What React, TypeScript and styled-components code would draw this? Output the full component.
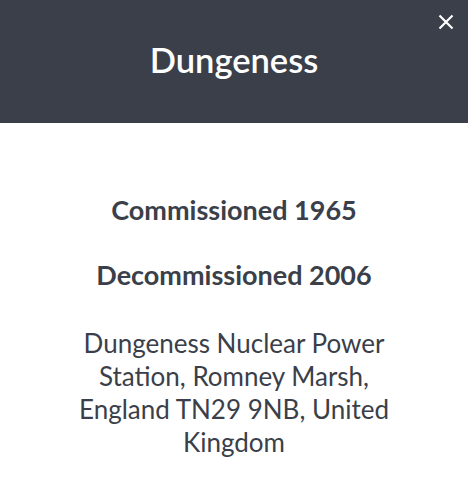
import React from 'react';
import styled, { createGlobalStyle } from 'styled-components';

const GlobalStyle = createGlobalStyle`
  html, body {
    margin: 0;
    padding: 0;
    background: #ffffff;
  }

  body {
    font-family: Lato, 'Open Sans', sans-serif;
    color: #3a3f4a;
  }
`;

const Modal = styled.div`
  width: 468px;
  height: 490px;
  display: flex;
  flex-direction: column;
  background: #ffffff;
`;

const Header = styled.header`
  position: relative;
  height: 123px;
  background: #3a3f4a;
  display: flex;
  align-items: center;
  justify-content: center;
`;

const Title = styled.h2`
  margin: 0 0 4px;
  color: #ffffff;
  font-size: 34.5px;
  font-weight: 600;
`;

const CloseButton = styled.button`
  position: absolute;
  top: 13px;
  right: 13px;
  width: 18px;
  height: 18px;
  padding: 0;
  border: 0;
  background: none;
  cursor: pointer;
  display: flex;
  align-items: center;
  justify-content: center;
`;

const Body = styled.div`
  padding: 70px 30px 0;
  display: flex;
  flex-direction: column;
  align-items: center;
  text-align: center;
`;

const Heading = styled.p`
  margin: 0 0 32px;
  font-size: 27px;
  font-weight: 700;
  line-height: 33px;
`;

const Address = styled.p`
  margin: 4px 0 0;
  font-size: 26px;
  line-height: 33px;
  max-width: 320px;
`;

const App = () => (
  <>
    <GlobalStyle />
    <Modal>
      <Header>
        <Title>Dungeness</Title>
        <CloseButton aria-label="Close">
          <svg width="16" height="16" viewBox="0 0 16 16">
            <path d="M1.5 1.5L14.5 14.5M14.5 1.5L1.5 14.5" stroke="#ffffff" strokeWidth="2.2" />
          </svg>
        </CloseButton>
      </Header>
      <Body>
        <Heading>Commissioned 1965</Heading>
        <Heading>Decommissioned 2006</Heading>
        <Address>
          Dungeness Nuclear Power Station, Romney Marsh, England TN29 9NB, United Kingdom
        </Address>
      </Body>
    </Modal>
  </>
);

export default App;
